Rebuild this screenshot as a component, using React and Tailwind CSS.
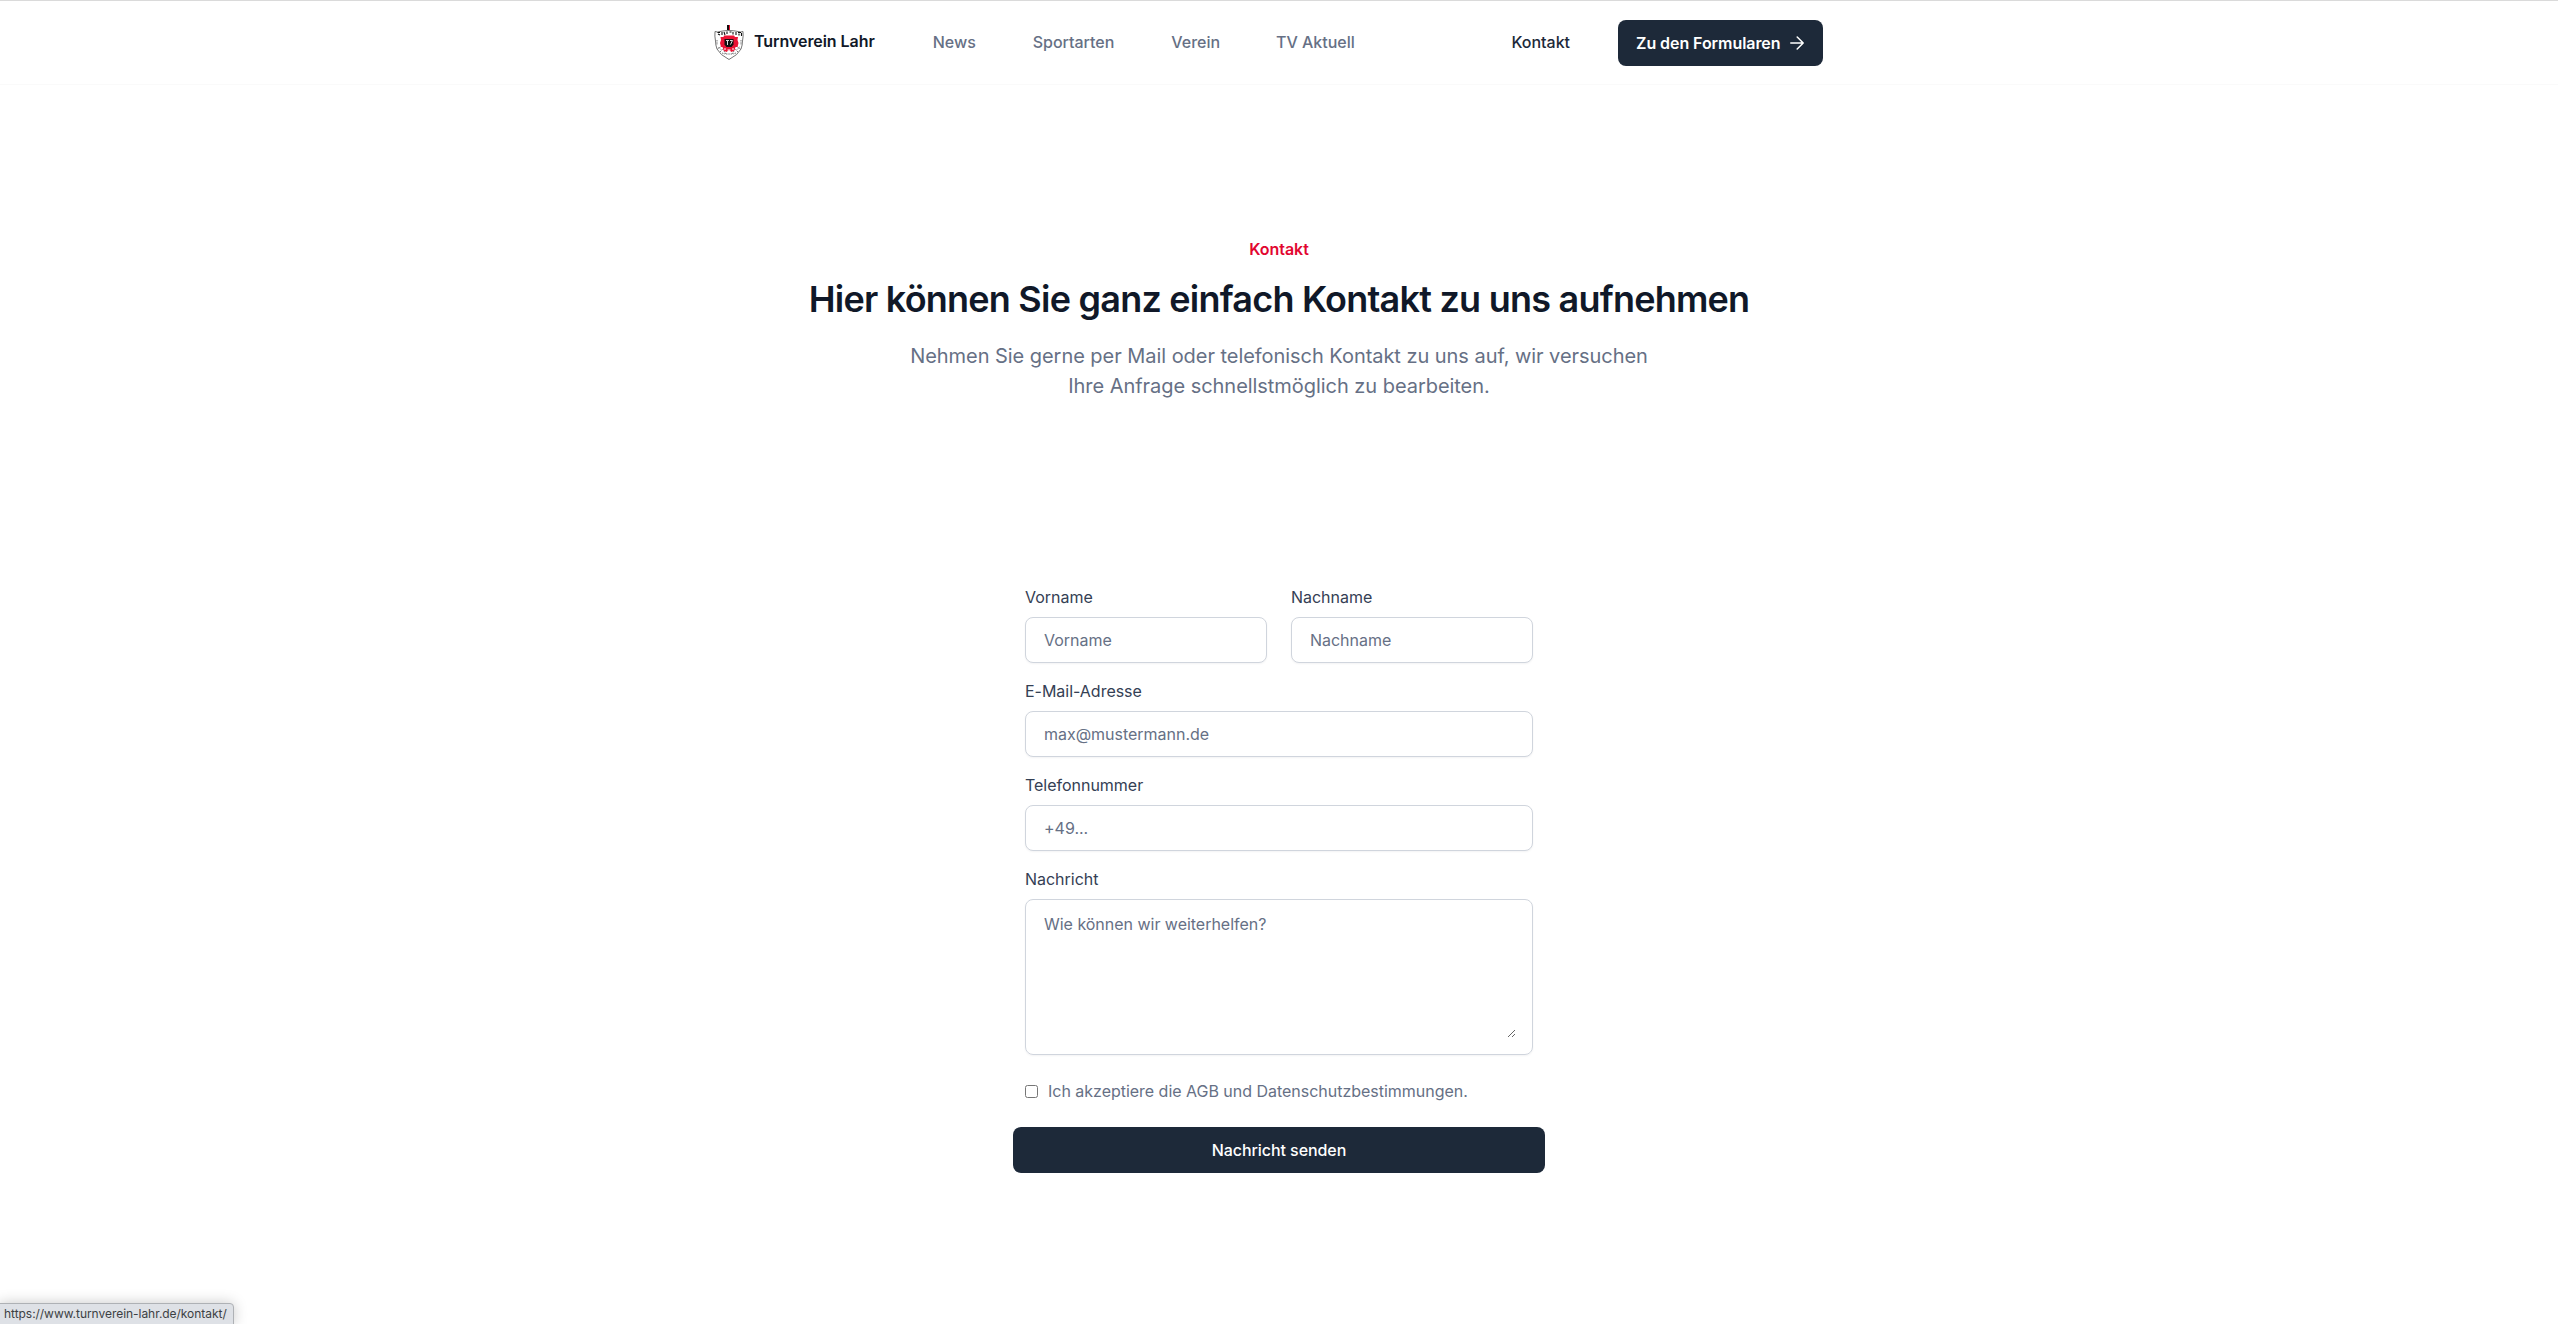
import React from "react";

const links = [
  { label: "News", gap: "ml-[58px]" },
  { label: "Sportarten", gap: "ml-[57px]" },
  { label: "Verein", gap: "ml-[57px]" },
  { label: "TV Aktuell", gap: "ml-14" },
];

function Crest() {
  return (
    <svg width="30" height="36" viewBox="0 0 30 36" className="shrink-0">
      <path d="M1 6.500Q3.500 7.500 6 6.500Q10 5.500 15 5.500Q20 5.500 24 6.500Q27 7.500 29 6.500Q29.500 11 28.500 16Q28.500 20 27 24Q24 30 15 34.500Q6 30 3 24Q1.500 20 1.500 16Q.5 11 1 6.500Z" fill="#fff" stroke="#666" strokeWidth=".9" />
      <path d="M3.500 7.500H6M8 7v3M10 7l1 3M13 6.500v2.500M15.500 7h2M19 7v2.500M22 7v3M24 7.500h3M4 9l2 1M25 8.500v2M27.500 8v3" stroke="#111" strokeWidth="1.100" fill="none" />
      <path d="M3 15v5M4.500 22l3 3M3.500 24l3-2M6 27l3-3M10 26l2 3M8 28l3 1M27 15v5M25.500 22l-3 3M26.500 24l-3-2M24 27l-3-3M20 26l-2 3M22 28l-3 1M12 29h6" stroke="#555" strokeWidth=".8" strokeDasharray="1.500 .8" fill="none" />
      <path d="M10 10.500h10l1 1.500h3l-.5 3 1 3-1 4h-2l-1 3.500-3 1.500-2.500-2-2.500 2-3-1.500-1-3.500H7l-1-4 1-3-.5-3h3z" fill="#ea1435" />
      <path d="M10.500 14h9v5.500l-2 2.500h-5l-2-2.500z" fill="#111" />
      <path d="M12 15.500h3M13.500 15.500v4.500M16 15.500h2.500l-2 4" stroke="#ddd" strokeWidth="1" fill="none" />
      <path d="M10 24h2M18 24h2M13.500 25h3" stroke="#fff" strokeWidth="1" />
      <path d="M13 0h2v5h-2z" fill="#111" />
      <path d="M15 0h1v5h-1z" fill="#e8112d" />
    </svg>
  );
}

function Field({ label, placeholder, type = "text" }) {
  return (
    <label className="block h-[70px] min-w-0">
      <span className="block h-6 leading-6 text-[#344054]">{label}</span>
      <input
        type={type}
        placeholder={placeholder}
        className="mt-2 block h-[46px] w-full rounded-lg border border-[#d0d5dd] bg-white px-[18px] leading-6 shadow-[0_1px_2px_rgba(16,24,40,0.05)] outline-none placeholder:text-[#667085]"
      />
    </label>
  );
}

export default function App() {
  return (
    <div className="relative h-[1324px] w-full overflow-hidden bg-white font-['Inter',sans-serif] text-base tracking-[-0.02px] text-[#101828]">
      <header className="flex h-[85px] border-t border-b border-t-[#dadada] border-b-[#fafafa]">
        <div className="mx-auto flex w-[1130px] pr-[21px]">
          <div className="mt-6 flex h-9">
            <Crest />
            <span className="ml-[10px] mt-1 h-6 leading-6 font-semibold tracking-[-0.06px] whitespace-nowrap">Turnverein Lahr</span>
          </div>
          <nav className="mt-[29px] flex h-6 leading-6 font-medium tracking-[-0.02px] whitespace-nowrap text-[#667085]">
            {links.map((l) => (
              <a key={l.label} href="#" className={l.gap}>{l.label}</a>
            ))}
          </nav>
          <a href="#" className="mt-[29px] ml-auto h-6 leading-6 font-medium text-[#1d2939]">Kontakt</a>
          <a href="#" className="mt-[19px] ml-12 flex h-[46px] w-[205px] items-center rounded-lg bg-[#1d2939] pl-[18px] font-semibold tracking-[-0.06px] whitespace-nowrap text-white">
            <span>Zu den Formularen</span>
            <svg width="14" height="14" viewBox="0 0 14 14" className="ml-[10px] shrink-0" fill="none" stroke="currentColor" strokeWidth="1.500" strokeLinecap="round" strokeLinejoin="round">
              <path d="M.8 7h12.400M7.200 1l6 6-6 6" />
            </svg>
          </a>
        </div>
      </header>

      <section className="flex flex-col items-center pt-[152px] text-center">
        <p className="h-6 leading-6 font-semibold text-[#e20630]">Kontakt</p>
        <h1 className="mt-4 h-11 text-[36px] leading-[44px] font-semibold tracking-[-0.77px] whitespace-nowrap">
          Hier können Sie ganz einfach Kontakt zu uns aufnehmen
        </h1>
        <p className="mt-5 w-[768px] text-xl leading-[30px] tracking-[-0.045px] text-[#667085]">
          Nehmen Sie gerne per Mail oder telefonisch Kontakt zu uns auf, wir versuchen
          <br />
          Ihre Anfrage schnellstmöglich zu bearbeiten.
        </p>
      </section>

      <form className="mx-auto mt-[184px] w-[532px]">
        <div className="flex flex-col gap-6 px-3">
          <div className="grid grid-cols-2 gap-6">
            <Field label="Vorname" placeholder="Vorname" />
            <Field label="Nachname" placeholder="Nachname" />
          </div>
          <Field label="E-Mail-Adresse" placeholder="max@mustermann.de" type="email" />
          <Field label="Telefonnummer" placeholder="+49..." type="tel" />
          <label className="block">
            <span className="block h-6 leading-6 text-[#344054]">Nachricht</span>
            <div className="mt-2 h-[156px] rounded-lg border border-[#d0d5dd] py-3 pr-4 pl-[18px] shadow-[0_1px_2px_rgba(16,24,40,0.05)]">
              <textarea placeholder="Wie können wir weiterhelfen?" className="block h-[126px] w-full resize leading-6 outline-none placeholder:text-[#667085]" />
            </div>
          </label>
          <label className="flex h-6 items-center text-[#667085]">
            <input type="checkbox" className="mr-[10px] h-[13px] w-[13px]" />
            <span className="leading-6">Ich akzeptiere die AGB und Datenschutzbestimmungen.</span>
          </label>
        </div>
        <button type="button" className="mt-6 h-[46px] w-full rounded-lg bg-[#1d2939] font-medium tracking-[-0.07px] text-white">
          Nachricht senden
        </button>
      </form>

      <div className="absolute -left-px top-[1303px] h-[22px] w-[235px] overflow-hidden rounded-tr border border-[#aeb1b5] bg-[#dee1e6] pl-1 text-[12px] leading-[20px] tracking-[-0.04px] whitespace-nowrap text-[#3c4043] shadow-[0_0_14px_rgba(0,0,0,0.22)]">
        https://www.turnverein-lahr.de/kontakt/
      </div>
    </div>
  );
}
